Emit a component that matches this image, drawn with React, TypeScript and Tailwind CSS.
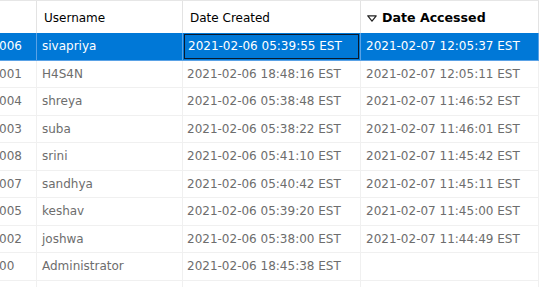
import React from "react";

const rows = [
  { id: "006", user: "sivapriya", created: "2021-02-06 05:39:55 EST", accessed: "2021-02-07 12:05:37 EST" },
  { id: "001", user: "H4S4N", created: "2021-02-06 18:48:16 EST", accessed: "2021-02-07 12:05:11 EST" },
  { id: "004", user: "shreya", created: "2021-02-06 05:38:48 EST", accessed: "2021-02-07 11:46:52 EST" },
  { id: "003", user: "suba", created: "2021-02-06 05:38:22 EST", accessed: "2021-02-07 11:46:01 EST" },
  { id: "008", user: "srini", created: "2021-02-06 05:41:10 EST", accessed: "2021-02-07 11:45:42 EST" },
  { id: "007", user: "sandhya", created: "2021-02-06 05:40:42 EST", accessed: "2021-02-07 11:45:11 EST" },
  { id: "005", user: "keshav", created: "2021-02-06 05:39:20 EST", accessed: "2021-02-07 11:45:00 EST" },
  { id: "002", user: "joshwa", created: "2021-02-06 05:38:00 EST", accessed: "2021-02-07 11:44:49 EST" },
  { id: "00", user: "Administrator", created: "2021-02-06 18:45:38 EST", accessed: "" },
  { id: "", user: "", created: "", accessed: "" },
];

const cols = "grid grid-cols-[37px_146px_178px_178px]";

export default function App() {
  return (
    <div
      className="w-[541px] h-[287px] overflow-hidden bg-white text-[12px] leading-none"
      style={{ fontFamily: '"DejaVu Sans", Verdana, sans-serif' }}
    >
      <div className="w-[539px]">
        <div className={`${cols} h-[33px] border-t border-[#e6e6e6] text-black`}>
          <div className="border-r border-[#e3e3e3]" />
          <div className="border-r border-[#e3e3e3] flex items-center pl-[7px] pt-[2px]">Username</div>
          <div className="border-r border-[#e3e3e3] flex items-center pl-[7px] pt-[2px]">Date Created</div>
          <div className="border-r border-[#e3e3e3] flex items-center pl-[6px] pt-[2px] font-bold text-[12.6px]">
            <svg width="10" height="7" viewBox="0 0 10 7" className="mr-[5px] mt-[1px]">
              <path d="M0.8 0.8 H9.2 L5 6.2 Z" fill="none" stroke="#222" strokeWidth="1.2" strokeLinejoin="round" />
            </svg>
            Date Accessed
          </div>
        </div>
        {rows.map((r, i) => {
          const sel = i === 0;
          const line = sel ? "border-[#5aa2e6]" : "border-[#f0f0f0]";
          return (
            <div
              key={i}
              className={`${cols} h-[27.5px] ${sel ? "bg-[#0078d7] text-white" : "text-[#6d6d6d]"}`}
            >
              <div className={`border-r border-b ${line} overflow-hidden flex items-center`}>
                <span className="-ml-[1px] whitespace-nowrap">{r.id}</span>
              </div>
              <div className={`border-r border-b ${line} flex items-center pl-[5px]`}>{r.user}</div>
              {sel ? (
                <div className="border-r border-b border-[#5aa2e6] flex">
                  <div className="flex-1 mx-[1px] my-[1px] border border-[#0a1a2e] flex items-center pl-[3px]">
                    {r.created}
                  </div>
                </div>
              ) : (
                <div className={`border-r border-b ${line} flex items-center pl-[4px]`}>{r.created}</div>
              )}
              <div className={`border-r border-b ${line} flex items-center pl-[5px]`}>{r.accessed}</div>
            </div>
          );
        })}
      </div>
    </div>
  );
}
